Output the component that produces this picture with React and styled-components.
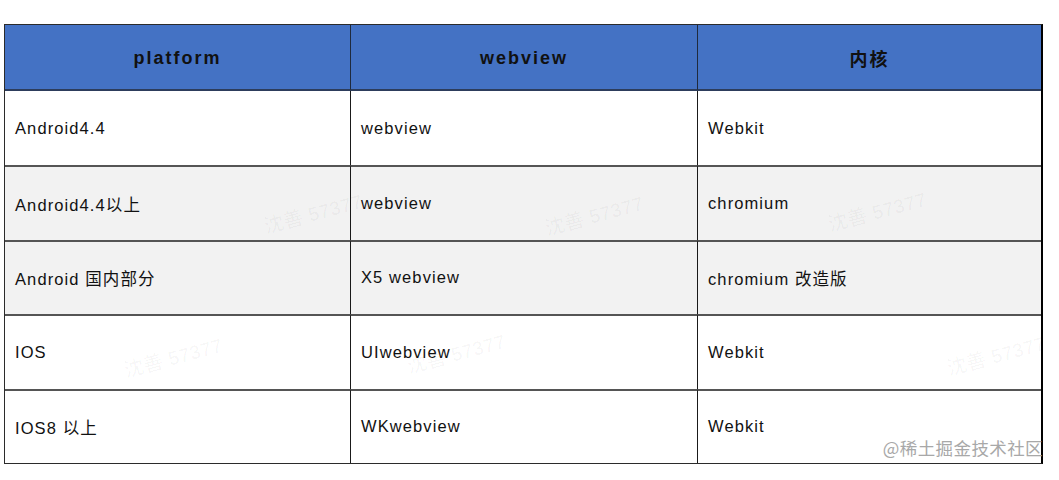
import React from "react";
import styled, { createGlobalStyle } from "styled-components";

const GlobalStyle = createGlobalStyle`
  body {
    margin: 0;
    background: #ffffff;
    font-family: "Liberation Sans", Arial, "Noto Sans CJK SC", sans-serif;
  }
`;

const Page = styled.div`
  position: relative;
  width: 1059px;
  height: 480px;
  padding: 24px 0 0 4px;
  box-sizing: border-box;
  overflow: hidden;
`;

const Table = styled.div`
  display: grid;
  grid-template-columns: 346px 347px 343px;
  grid-template-rows: 66px repeat(5, 74.4px);
  width: 1036px;
  border-top: 1px solid #2b2b2b;
  border-left: 1px solid #2b2b2b;
  border-right: 2px solid #000;
  border-bottom: 1px solid #2b2b2b;
`;

const HeadCell = styled.div`
  display: flex;
  align-items: center;
  justify-content: center;
  padding-top: 2px;
  background: #4472c4;
  color: #111;
  font-weight: bold;
  font-size: 18px;
  letter-spacing: 2px;
  border-right: ${(p) => (p.$last ? "none" : "1px solid #1f2a3d")};
  border-bottom: 2px solid #2d3d5c;
`;

const Cell = styled.div`
  display: flex;
  align-items: center;
  padding-left: 10px;
  background: ${(p) => (p.$shade ? "#f2f2f2" : "#ffffff")};
  color: #111;
  font-size: 16.5px;
  letter-spacing: 1.1px;
  border-right: ${(p) => (p.$last ? "none" : "1px solid #1a1a1a")};
  border-top: ${(p) => (p.$first ? "none" : "2px solid #555")};
`;

const Mark = styled.div`
  position: absolute;
  color: rgba(0, 0, 0, 0.028);
  font-size: 20px;
  font-weight: bold;
  transform: rotate(-15deg);
  white-space: nowrap;
  pointer-events: none;
`;

const Credit = styled.div`
  position: absolute;
  right: 16px;
  bottom: 20px;
  color: #a8a8a8;
  font-family: "Noto Sans CJK SC", sans-serif;
  font-size: 17.5px;
  letter-spacing: 0.4px;
  pointer-events: none;
`;

const heads = ["platform", "webview", "内核"];

const rows = [
  ["Android4.4", "webview", "Webkit"],
  ["Android4.4以上", "webview", "chromium"],
  ["Android 国内部分", "X5 webview", "chromium 改造版"],
  ["IOS", "UIwebview", "Webkit"],
  ["IOS8 以上", "WKwebview", "Webkit"],
];

const shaded = [false, true, true, false, false];

const marks = [
  [262, 198],
  [543, 200],
  [826, 196],
  [122, 342],
  [405, 338],
  [945, 340],
];

export default function App() {
  return (
    <Page>
      <GlobalStyle />
      <Table>
        {heads.map((h, i) => (
          <HeadCell key={h} $last={i === 2}>
            {h}
          </HeadCell>
        ))}
        {rows.map((r, ri) =>
          r.map((c, ci) => (
            <Cell
              key={ri + "-" + ci}
              $shade={shaded[ri]}
              $first={ri === 0}
              $last={ci === 2}
            >
              {c}
            </Cell>
          ))
        )}
      </Table>
      {marks.map(([x, y], i) => (
        <Mark key={i} style={{ left: x, top: y }}>
          沈善 57377
        </Mark>
      ))}
      <Credit>@稀土掘金技术社区</Credit>
    </Page>
  );
}
